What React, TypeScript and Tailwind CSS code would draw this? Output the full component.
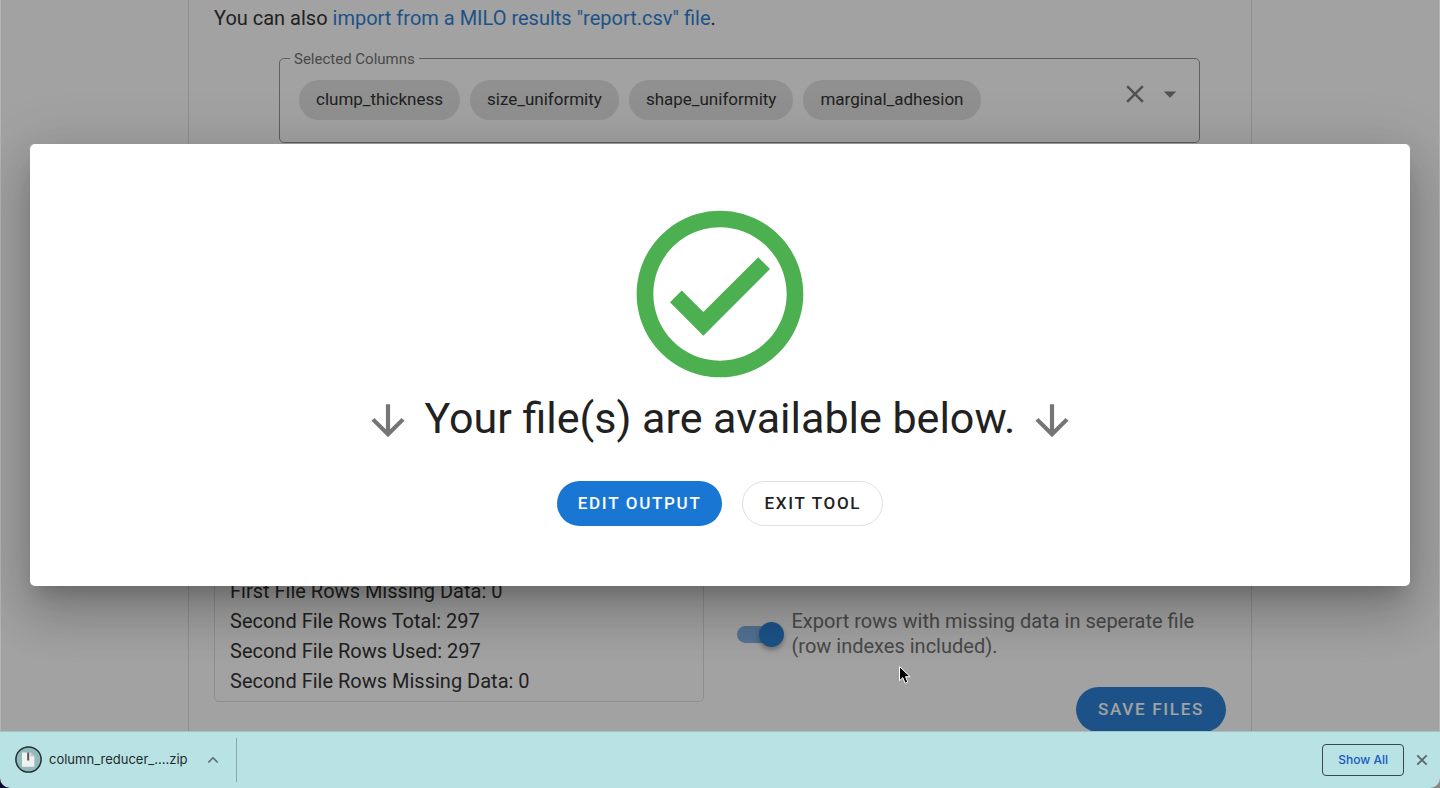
import React from "react";

const columns = ["clump_thickness", "size_uniformity", "shape_uniformity", "marginal_adhesion"];

const stats = [
  "First File Rows Missing Data: 0",
  "Second File Rows Total: 297",
  "Second File Rows Used: 297",
  "Second File Rows Missing Data: 0",
];

const paths = {
  close:
    "M19,6.41L17.59,5L12,10.59L6.41,5L5,6.41L10.59,12L5,17.59L6.41,19L12,13.41L17.59,19L19,17.59L13.41,12L19,6.41Z",
  menuDown: "M7,10L12,15L17,10H7Z",
  arrowDown: "M11,4H13V16L18.5,10.5L19.92,11.92L12,19.84L4.08,11.92L5.5,10.5L11,16V4Z",
  checkCircle:
    "M12 2C6.5 2 2 6.5 2 12S6.5 22 12 22 22 17.5 22 12 17.5 2 12 2M12 20C7.59 20 4 16.41 4 12S7.59 4 12 4 20 7.59 20 12 16.41 20 12 20M16.59 7.58L10 14.17L7.41 11.59L6 13L10 17L18 9L16.59 7.58Z",
};

function Icon({ path, className }: { path: string; className: string }) {
  return (
    <svg viewBox="0 0 24 24" fill="currentColor" aria-hidden="true" className={className}>
      <path d={path} />
    </svg>
  );
}

function SelectedColumns() {
  return (
    <fieldset className="ml-[65px] mr-[26px] rounded-[5px] border border-[#8c8c8c] pb-[22px] pl-[19px] pr-[14px]">
      <legend className="ml-[-9px] h-[18px] px-1 text-[15px] leading-5 text-[#666666]">Selected Columns</legend>
      <div className="flex items-start justify-between pt-3">
        <ul className="flex flex-wrap gap-[10px] pt-px">
          {columns.map((name) => (
            <li key={name} className="flex h-10 items-center rounded-full bg-[#e0e0e0] px-[17px] text-[17px] text-[#212121]">
              {name}
            </li>
          ))}
        </ul>
        <div className="flex gap-[5px] text-[#757575]">
          <button type="button" aria-label="Clear selected columns">
            <Icon path={paths.close} className="size-[30px]" />
          </button>
          <button type="button" aria-label="Open column list">
            <Icon path={paths.menuDown} className="size-[30px]" />
          </button>
        </div>
      </div>
    </fieldset>
  );
}

function ToolPage() {
  return (
    <div className="mx-auto flex h-full max-w-[1064px] flex-col border-x border-[#dedede] px-[25px] text-xl text-[#212121]">
      <p className="pt-[3px] leading-[30px]">
        You can also{" "}
        <a href="#import" className="text-[#1976d2]">
          import from a MILO results "report.csv" file
        </a>
        .
      </p>
      <div className="pt-4">
        <SelectedColumns />
      </div>
      <div className="grid flex-1 grid-cols-2 items-end gap-x-[33px]">
        <div className="mb-[29px] flex h-[400px] flex-col justify-end rounded-[5px] border border-[#dedede] px-[15px] pb-[5px] leading-[30px]">
          {stats.map((line) => (
            <p key={line}>{line}</p>
          ))}
        </div>
        <div className="-mb-px flex flex-col gap-7">
          <label className="flex items-center gap-[10px] leading-[25px] text-[#666666]">
            <input
              type="checkbox"
              defaultChecked
              className="flex h-[17px] w-[45px] shrink-0 appearance-none items-center rounded-full bg-[#75ade4] before:ml-[22px] before:size-[25px] before:shrink-0 before:rounded-full before:bg-[#1976d2] before:shadow-[0_3px_5px_rgba(0,0,0,0.35)] before:content-['']"
            />
            <span>Export rows with missing data in seperate file (row indexes included).</span>
          </label>
          <button
            type="button"
            className="h-[45px] self-end rounded-full bg-[#1976d2] px-[22px] text-[17px] font-medium tracking-widest text-white"
          >
            SAVE FILES
          </button>
        </div>
      </div>
    </div>
  );
}

function FilesDialog() {
  return (
    <div className="absolute inset-0 flex items-center justify-center border-x border-white/20 bg-[#212121]/42 px-[29px] pb-[31px] pt-[30px]">
      <section
        role="dialog"
        aria-labelledby="dialog-title"
        className="flex w-full flex-col items-center rounded-[5px] bg-white pb-[60px] pt-[50px] shadow-[0_14px_19px_-9px_rgba(0,0,0,0.2),0_30px_48px_4px_rgba(0,0,0,0.14),0_11px_58px_10px_rgba(0,0,0,0.12)]"
      >
        <Icon path={paths.checkCircle} className="size-[200px] text-[#4caf50]" />
        <div className="flex items-start gap-3 pt-[2px]">
          <Icon path={paths.arrowDown} className="size-[50px] text-[#757575]" />
          <h1 id="dialog-title" className="text-[43px] leading-[44px] text-[#212121]">
            Your file(s) are available below.
          </h1>
          <Icon path={paths.arrowDown} className="size-[50px] text-[#757575]" />
        </div>
        <div className="flex gap-5 pt-[35px]">
          <button
            type="button"
            className="h-[45px] rounded-full bg-[#1976d2] px-[21px] text-[17px] font-medium tracking-widest text-white"
          >
            EDIT OUTPUT
          </button>
          <button
            type="button"
            className="h-[45px] rounded-full border border-[#e0e0e0] px-[21px] text-[17px] font-medium tracking-widest text-[#212121]"
          >
            EXIT TOOL
          </button>
        </div>
      </section>
    </div>
  );
}

function DownloadShelf() {
  return (
    <div className="bg-linear-to-r from-[#0c0724] from-50% to-[#8a8583] to-50%">
      <footer className="flex h-[57px] items-center rounded-b-[10px] border-t border-[#a0c3c4] bg-[#b8e2e3] pl-[15px] pr-[11px] font-[Inter,sans-serif] text-[13px] text-[#1f2a2c]">
        <button type="button" className="flex items-center gap-[6px]">
          <svg viewBox="0 0 28 28" className="size-7" aria-hidden="true">
            <circle cx="13.5" cy="13.5" r="12.6" fill="#91babd" stroke="#262f31" strokeWidth="1.5" />
            <path d="M7 6.5h8.4l4 4v10.3H7z" fill="#f1f1f1" />
            <path d="M15.4 6.5v4h4z" fill="#c9c9c9" />
            <path d="M12.2 6.5h2v8h-2z" fill="#555" />
          </svg>
          <span>column_reducer_....zip</span>
        </button>
        <button type="button" aria-label="Download options" className="ml-[18px]">
          <svg viewBox="0 0 14 14" className="size-[14px]" fill="none" stroke="#5a6a6c" strokeWidth="1.6" aria-hidden="true">
            <path d="M2.3 9.5L7 4.8l4.7 4.7" />
          </svg>
        </button>
        <div className="ml-4 h-11 w-px bg-[#8aa6a8]" />
        <button
          type="button"
          className="ml-auto h-8 rounded-[4px] border border-[#3b4648] px-[15px] text-xs font-medium text-[#1a56c4]"
        >
          Show All
        </button>
        <button type="button" aria-label="Close downloads bar" className="ml-[11px]">
          <svg viewBox="0 0 14 14" className="size-[14px]" fill="none" stroke="#5a6669" strokeWidth="1.8" aria-hidden="true">
            <path d="M2.3 2.3l9.4 9.4M11.7 2.3l-9.4 9.4" />
          </svg>
        </button>
      </footer>
    </div>
  );
}

export default function App() {
  return (
    <div className="flex h-screen flex-col overflow-hidden font-[Roboto,sans-serif]">
      <main className="relative min-h-0 flex-1 overflow-hidden bg-white">
        <ToolPage />
        <FilesDialog />
        <svg
          viewBox="0 0 14 20"
          className="absolute left-[898px] top-[665px] h-5 w-[14px]"
          aria-hidden="true"
        >
          <path
            d="M1.5 1.5v14.2l3.3-3.1 2.3 5.6 2.7-1.1-2.3-5.4h4.6z"
            fill="#000"
            stroke="#fff"
            strokeWidth="1"
            strokeLinejoin="round"
          />
        </svg>
      </main>
      <DownloadShelf />
    </div>
  );
}
